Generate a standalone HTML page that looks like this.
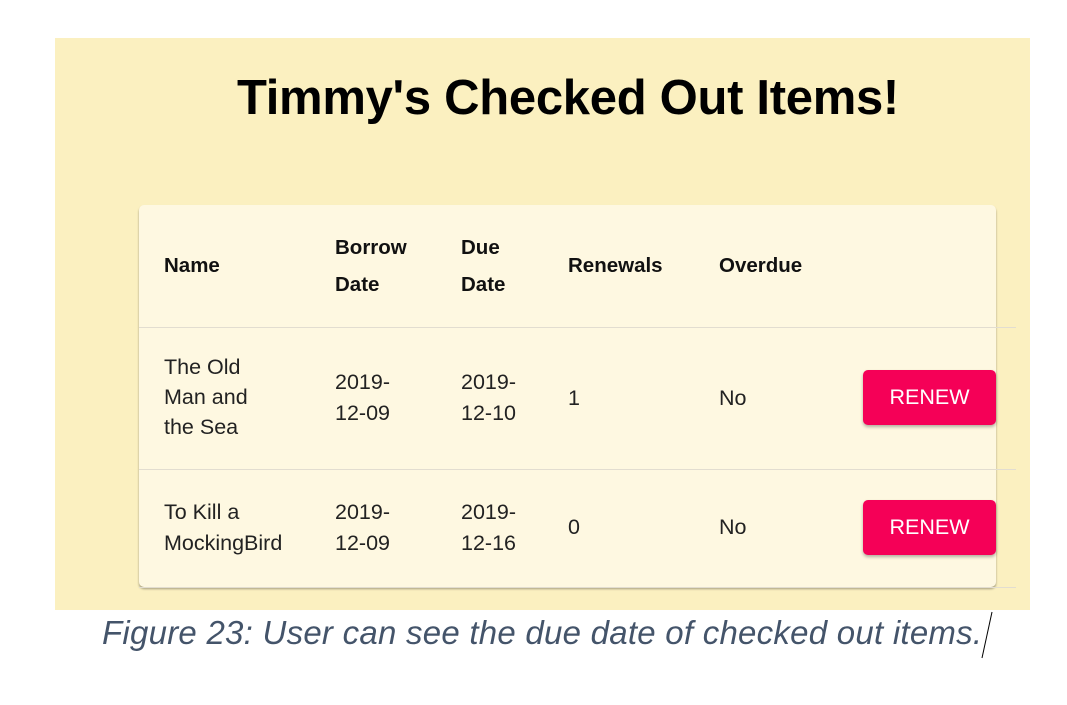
<!DOCTYPE html>
<html><head><style>
body{margin:0;width:1067px;height:705px;background:#fff;position:relative;font-family:"Liberation Sans",Arial,sans-serif;overflow:hidden}
.panel{position:absolute;left:55px;top:38px;width:975px;height:572px;background:#fbf0c0}
h1{position:absolute;left:237px;top:70px;margin:0;white-space:nowrap;font-size:49px;font-weight:bold;color:#000;font-family:"Liberation Sans",sans-serif;letter-spacing:-0.3px}
.card{position:absolute;left:139px;top:205px;width:857px;height:382px;background:#fef8e1;border-radius:5px;box-shadow:0 2px 2px rgba(0,0,0,.35)}
.line{position:absolute;left:139px;width:877px;height:1px;background:#e2ddd0}
.t{position:absolute;font-size:21.5px;line-height:31px;color:#222;white-space:nowrap}
.b{font-weight:bold;color:#111;line-height:37px;font-size:20.5px}
.btn{position:absolute;left:863px;width:133px;height:55px;background:#f50057;border-radius:5px;color:#fff;font-size:21.5px;text-align:center;line-height:55px;box-shadow:0 2px 3px rgba(0,0,0,.3)}
.cap{position:absolute;top:614px;left:102px;white-space:nowrap;font-family:"Liberation Sans",sans-serif;font-style:italic;font-size:33px;color:#44546a;letter-spacing:0.25px}
</style></head><body>
<div class="panel"></div>
<h1>Timmy's Checked Out Items!</h1>
<div class="card"></div>
<div class="line" style="top:327px"></div>
<div class="line" style="top:469px"></div>
<div class="line" style="top:587px"></div>
<div class="t b" style="left:164px;top:247px">Name</div>
<div class="t b" style="left:335px;top:229px">Borrow<br>Date</div>
<div class="t b" style="left:461px;top:229px">Due<br>Date</div>
<div class="t b" style="left:568px;top:247px">Renewals</div>
<div class="t b" style="left:719px;top:247px">Overdue</div>
<div class="t" style="left:164px;top:352px;line-height:30px">The Old<br>Man and<br>the Sea</div>
<div class="t" style="left:335px;top:367px">2019-<br>12-09</div>
<div class="t" style="left:461px;top:367px">2019-<br>12-10</div>
<div class="t" style="left:568px;top:383px">1</div>
<div class="t" style="left:719px;top:383px">No</div>
<div class="btn" style="top:370px">RENEW</div>
<div class="t" style="left:164px;top:497px">To Kill a<br>MockingBird</div>
<div class="t" style="left:335px;top:497px">2019-<br>12-09</div>
<div class="t" style="left:461px;top:497px">2019-<br>12-16</div>
<div class="t" style="left:568px;top:512px">0</div>
<div class="t" style="left:719px;top:512px">No</div>
<div class="btn" style="top:500px">RENEW</div>
<div class="cap">Figure 23: User can see the due date of checked out items.</div>
<svg style="position:absolute;left:978px;top:610px" width="16" height="50"><line x1="14" y1="2" x2="4" y2="48" stroke="#000" stroke-width="1"/></svg>
</body></html>
